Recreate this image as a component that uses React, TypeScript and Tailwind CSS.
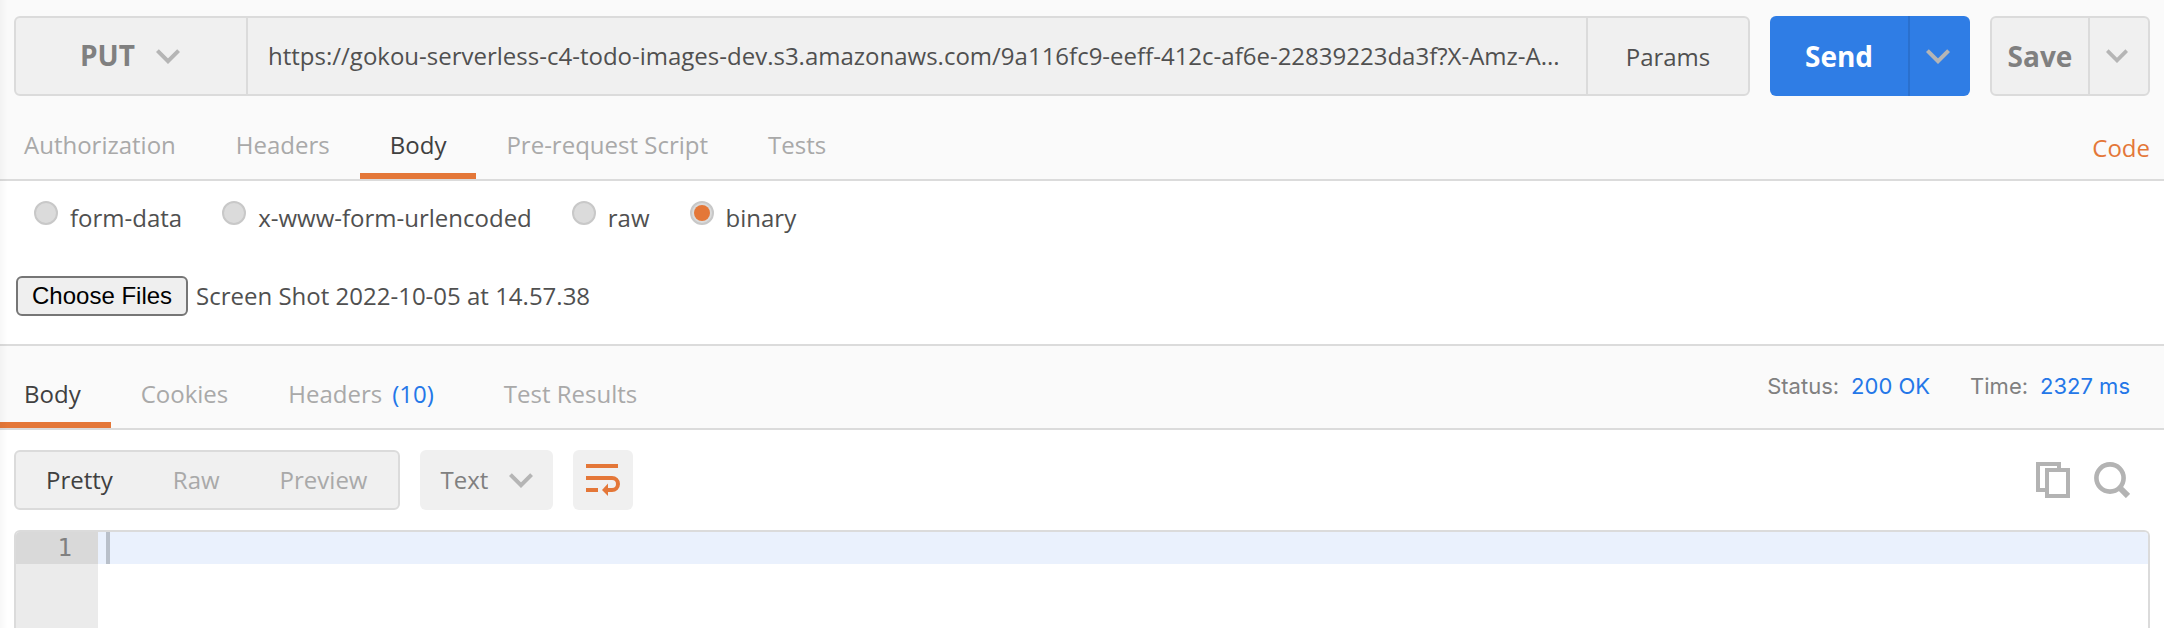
import { useRef, useState } from "react";

type ChevronProps = { className: string };

function Chevron({ className }: ChevronProps) {
  return (
    <svg viewBox="0 0 24 15" className={className} fill="none" stroke="#b5b5b5" strokeWidth="4" aria-hidden="true">
      <path d="M1.4 1.6 12 12.2 22.6 1.6" />
    </svg>
  );
}

function WrapIcon() {
  return (
    <svg width="36" height="32" viewBox="0 0 36 32" fill="none" stroke="#e47738" strokeWidth="4" aria-hidden="true">
      <path d="M1 2H33M1 14H27a6 6 0 0 1 0 12H22M1 26H13" />
      <path d="M23 19.5V32L17 26Z" fill="#e47738" stroke="none" />
    </svg>
  );
}

function CopyIcon() {
  return (
    <svg width="34" height="36" viewBox="0 0 34 36" fill="none" stroke="#b3b3b3" strokeWidth="4" aria-hidden="true">
      <path d="M9 28H2V2H23V6" />
      <path d="M11 8H32V34H11Z" />
    </svg>
  );
}

function SearchIcon() {
  return (
    <svg width="36" height="36" viewBox="0 0 36 36" fill="none" stroke="#b3b3b3" strokeWidth="4.6" aria-hidden="true">
      <circle cx="16" cy="16" r="13.6" />
      <path d="M25 25 34 34" strokeWidth="6" />
    </svg>
  );
}

const requestTabs = ["Authorization", "Headers", "Body", "Pre-request Script", "Tests"];
const bodyModes = ["form-data", "x-www-form-urlencoded", "raw", "binary"];
const responseTabs = [
  { label: "Body" },
  { label: "Cookies" },
  { label: "Headers", count: 10 },
  { label: "Test Results" },
];
const views = ["Pretty", "Raw", "Preview"];

export default function App() {
  const [requestTab, setRequestTab] = useState("Body");
  const [mode, setMode] = useState("binary");
  const [responseTab, setResponseTab] = useState("Body");
  const [view, setView] = useState("Pretty");
  const [fileName, setFileName] = useState("Screen Shot 2022-10-05 at 14.57.38");
  const fileRef = useRef<HTMLInputElement>(null);

  return (
    <div className="relative flex min-h-screen flex-col overflow-hidden bg-white font-['Open_Sans',sans-serif] text-2xl text-[#505050]">
      <header className="border-b-2 border-[#dbdbdb] bg-[#fafafa] pt-4">
        <div className="flex h-20 gap-5 px-3.5">
          <div className="flex min-w-0 flex-1 overflow-hidden rounded-md border-2 border-[#dbdbdb] bg-[#f0f0f0]">
            <div className="grid w-[232px] shrink-0 items-center border-r-2 border-[#dbdbdb]">
              <select
                aria-label="Method"
                defaultValue="PUT"
                className="col-start-1 row-start-1 h-full appearance-none pl-16 text-[28px] font-bold text-[#808080] outline-none"
              >
                <option>GET</option>
                <option>POST</option>
                <option>PUT</option>
              </select>
              <Chevron className="pointer-events-none col-start-1 row-start-1 mr-[66px] h-[15px] w-6 justify-self-end" />
            </div>
            <input
              type="text"
              aria-label="Request URL"
              defaultValue="https://gokou-serverless-c4-todo-images-dev.s3.amazonaws.com/9a116fc9-eeff-412c-af6e-22839223da3f?X-Amz-A..."
              className="min-w-0 flex-1 text-ellipsis pr-5 pl-5 outline-none"
            />
            <button className="w-[162px] shrink-0 border-l-2 border-[#dbdbdb] pt-0.5">Params</button>
          </div>
          <div className="flex w-[200px] overflow-hidden rounded-md bg-[#2f7de5]">
            <button className="flex-1 pt-0.5 text-[28px] font-bold text-white">Send</button>
            <button aria-label="Send options" className="flex w-[62px] items-center justify-center border-l-2 border-[#2a70ce] pr-1">
              <Chevron className="h-[15px] w-6" />
            </button>
          </div>
          <div className="flex w-40 overflow-hidden rounded-md border-2 border-[#dbdbdb] bg-[#f0f0f0]">
            <button className="flex-1 pt-0.5 text-[28px] font-bold text-[#808080]">Save</button>
            <button aria-label="Save options" className="flex w-[60px] items-center justify-center border-l-2 border-[#dbdbdb] pr-1">
              <Chevron className="h-3.5 w-[22px]" />
            </button>
          </div>
        </div>
        <div className="flex h-[83px] items-stretch justify-between pr-3.5">
          <nav className="flex">
            {requestTabs.map((tab) => (
              <button
                key={tab}
                onClick={() => setRequestTab(tab)}
                className={`border-b-6 px-[30px] pt-5 first:pl-6 ${
                  requestTab === tab ? "border-[#e47738] text-[#404040]" : "border-transparent text-[#a9a9a9]"
                }`}
              >
                {tab}
              </button>
            ))}
          </nav>
          <a href="#code" className="self-center pt-5 text-[#e47738]">
            Code
          </a>
        </div>
      </header>

      <section className="h-[163px] shrink-0">
        <div className="flex gap-10 pt-5 pl-[34px]">
          {bodyModes.map((item) => (
            <label key={item} className="flex gap-3">
              <input
                type="radio"
                name="mode"
                checked={mode === item}
                onChange={() => setMode(item)}
                className="size-6 appearance-none rounded-full border-2 border-[#c8c8c8] bg-[#dbdbdb] p-[2px] before:block before:size-4 before:rounded-full checked:before:bg-[#e47738]"
              />
              <span className="leading-[34px]">{item}</span>
            </label>
          ))}
        </div>
        <div className="mt-[41px] flex items-center gap-2 pl-4">
          <button
            onClick={() => fileRef.current?.click()}
            className="h-10 rounded-md border-2 border-[#767676] bg-[#efefef] px-3.5 font-['Liberation_Sans',sans-serif] leading-9 text-black"
          >
            Choose Files
          </button>
          <input
            ref={fileRef}
            type="file"
            aria-label="Body file"
            className="hidden"
            onChange={(event) => setFileName(event.target.files?.[0]?.name ?? "")}
          />
          <span className="leading-10">{fileName}</span>
        </div>
      </section>

      <div className="flex h-[86px] shrink-0 justify-between border-y-2 border-[#dbdbdb] bg-[#fafafa] pr-[34px]">
        <nav className="flex">
          {responseTabs.map(({ label, count }) => (
            <button
              key={label}
              onClick={() => setResponseTab(label)}
              className={`flex items-center border-b-6 px-[30px] pt-5 first:pl-6 ${
                responseTab === label ? "border-[#e47738] text-[#404040]" : "border-transparent text-[#a9a9a9]"
              }`}
            >
              {label}
              {count !== undefined && <span className="px-2.5 text-[#2477e8]">({count})</span>}
            </button>
          ))}
        </nav>
        <dl className="flex items-center gap-10 font-['Inter',sans-serif] text-[22px] text-[#808080]">
          <div className="flex gap-3">
            <dt>Status:</dt>
            <dd className="text-[#2477e8]">200 OK</dd>
          </div>
          <div className="flex gap-3">
            <dt>Time:</dt>
            <dd className="text-[#2477e8]">2327 ms</dd>
          </div>
        </dl>
      </div>

      <div className="flex shrink-0 items-center gap-5 py-5 pr-[34px] pl-3.5">
        <div className="flex h-[60px] rounded-md border-2 border-[#dbdbdb] bg-[#f0f0f0] pr-px">
          {views.map((item) => (
            <button
              key={item}
              onClick={() => setView(item)}
              className={`px-[30px] ${view === item ? "text-[#404040]" : "text-[#a9a9a9]"}`}
            >
              {item}
            </button>
          ))}
        </div>
        <div className="grid h-[60px] w-[133px] items-center rounded-md bg-[#f0f0f0]">
          <select
            aria-label="Format"
            className="col-start-1 row-start-1 h-full appearance-none pl-5 text-[#808080] outline-none"
          >
            <option>Text</option>
            <option>JSON</option>
          </select>
          <Chevron className="pointer-events-none col-start-1 row-start-1 mr-5 h-[15px] w-6 justify-self-end" />
        </div>
        <button aria-label="Wrap lines" className="flex size-[60px] items-center justify-center rounded-md bg-[#f0f0f0]">
          <WrapIcon />
        </button>
        <div className="ml-auto flex gap-6">
          <button aria-label="Copy">
            <CopyIcon />
          </button>
          <button aria-label="Search">
            <SearchIcon />
          </button>
        </div>
      </div>

      <main className="mx-3.5 flex flex-1 overflow-hidden rounded-t-md border-2 border-b-0 border-[#dbdbdb]">
        <div className="w-[82px] bg-[#ebebeb]">
          <div className="h-8 bg-[#d9d9d9] pr-[26px] text-right font-['DejaVu_Sans_Mono',monospace] leading-8 text-[#808080]">
            1
          </div>
        </div>
        <div className="h-8 flex-1 bg-[#eaf1fd] pl-2">
          <div className="h-8 w-1 bg-[#b9c0ca]" />
        </div>
      </main>

      <div className="pointer-events-none absolute inset-y-0 left-0 w-2 bg-linear-to-r from-black/3 to-transparent" />
    </div>
  );
}
